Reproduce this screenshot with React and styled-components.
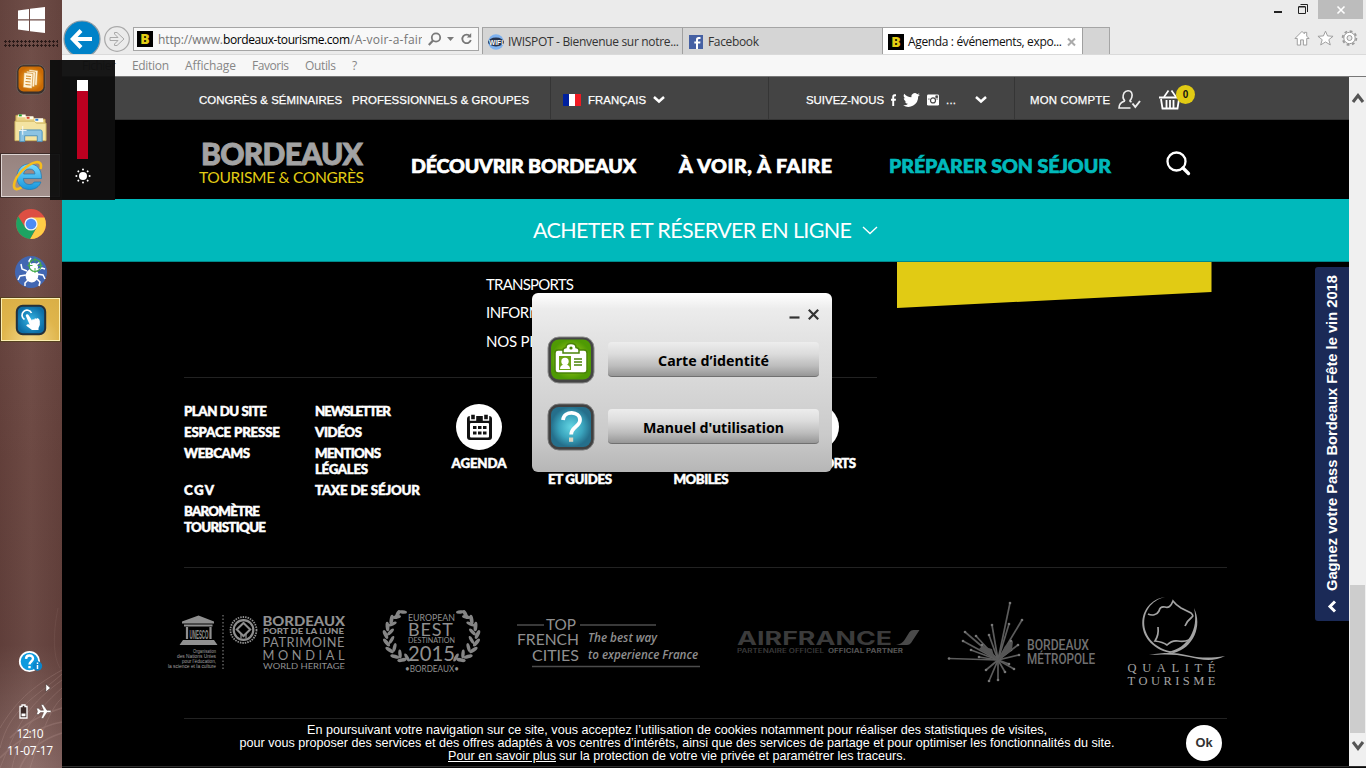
import React, { useLayoutEffect, useRef, useState } from "react";
import styled, { createGlobalStyle } from "styled-components";

const Global = createGlobalStyle`
  * { box-sizing: border-box; }
  html, body { margin: 0; padding: 0; overflow: hidden; background: #000; }
  svg { display: block; flex: none; overflow: visible; }
`;

const ui = `"Open Sans", "Noto Sans", sans-serif`;
const arial = `"Liberation Sans", Arial, sans-serif`;
const geo = `Lato, "Open Sans", sans-serif`;

/* Label that spreads its letters to fill a given width */
const FitBox = styled.span`
  display: inline-block;
  flex: none;
  white-space: nowrap;
  width: ${(p) => p.$w}px;
`;
function Fit({ w, children }) {
  const ref = useRef(null);
  const [spacing, setSpacing] = useState(0);
  useLayoutEffect(() => {
    const range = document.createRange();
    range.selectNodeContents(ref.current);
    const count = ref.current.textContent.length;
    setSpacing((w - range.getBoundingClientRect().width) / Math.max(1, count - 1));
  }, [w]);
  return (
    <FitBox $w={w} ref={ref} style={{ letterSpacing: `${spacing}px` }}>
      {children}
    </FitBox>
  );
}

/* ---------- shell ---------- */
const Desktop = styled.div`
  position: relative;
  display: flex;
  width: 1366px;
  height: 768px;
  overflow: hidden;
`;
const Taskbar = styled.aside`
  position: relative;
  display: flex;
  flex-direction: column;
  align-items: center;
  width: 62px;
  height: 768px;
  background: linear-gradient(90deg, rgba(40, 15, 15, 0.12), rgba(255, 255, 255, 0.02) 50%, rgba(40, 15, 15, 0.12)),
    linear-gradient(180deg, #6c4a44 0%, #714d47 30%, #6a4640 60%, #674540 84%, #785853 91%, #8d6d69 100%);
`;
const Strands = styled.svg`
  position: absolute;
  left: 0;
  top: 608px;
  z-index: 0;
`;
const StartSlot = styled.div`
  height: 40px;
  padding-top: 7px;
`;
const Grip = styled.div`
  width: 54px;
  height: 8px;
  margin-bottom: 8px;
  background: radial-gradient(circle at 1.5px 1.5px, #2a1a18 1px, transparent 1.3px) 0 0 / 4px 4px;
`;
const TaskButton = styled.div`
  display: flex;
  align-items: center;
  justify-content: center;
  width: 61px;
  height: 45px;
  margin: 1px 1px 2px 0;
  ${(p) => p.$kind === "open" && `background: linear-gradient(180deg, #97837f, #a3918d); border: 1px solid #3f2c29; box-shadow: inset 0 0 0 1px #ded4d2; padding-right: 5px;`}
  ${(p) => p.$kind === "active" && `background: radial-gradient(circle at 50% 100%, #f4d98a, #dfb54c 55%, #d9ae45); border: 1px solid #55401f; box-shadow: inset 0 0 0 1px #fbeeb0;`}
`;
const Tray = styled.div`
  position: relative;
  z-index: 1;
  display: flex;
  flex-direction: column;
  width: 62px;
  margin-top: auto;
  height: 118px;
  color: #fff;
  font: 12px/17px ${ui};
`;
const TrayHelp = styled.div`
  padding-left: 18px;
  height: 33px;
`;
const TrayArrow = styled.div`
  padding-left: 45px;
  height: 21px;
`;
const TrayStatus = styled.div`
  display: flex;
  gap: 8px;
  padding-left: 19px;
  height: 21px;
`;
const Clock = styled.div`
  display: flex;
  flex-direction: column;
  align-items: center;
  padding-right: 2px;
`;
const Brightness = styled.div`
  position: absolute;
  left: 50px;
  top: 60px;
  z-index: 5;
  display: flex;
  flex-direction: column;
  align-items: center;
  width: 65px;
  height: 140px;
  padding-top: 20px;
  gap: 9px;
  background: rgba(14, 14, 14, 0.96);
`;
const Level = styled.div`
  width: 11px;
  height: 79px;
  border-top: 11px solid #fff;
  background: #bd0020;
`;

/* ---------- browser chrome ---------- */
const Browser = styled.main`
  display: flex;
  flex-direction: column;
  width: 1304px;
  height: 768px;
  background: #ebebeb;
`;
const TitleBar = styled.div`
  display: flex;
  justify-content: flex-end;
  height: 19px;
  padding-right: 3px;
`;
const WinControls = styled.div`
  display: flex;
  align-items: flex-start;
  gap: 16px;
  padding: 4px 10px 0 0;
`;
const CloseBox = styled.div`
  display: flex;
  align-items: center;
  justify-content: center;
  width: 45px;
  height: 19px;
  background: #bcbcbc;
`;
const NavRow = styled.div`
  display: flex;
  align-items: flex-start;
  height: 35px;
  overflow: hidden;
`;
const BackBtn = styled.div`
  width: 39px;
  padding: 1px 0 0 1px;
`;
const ForwardBtn = styled.div`
  width: 32px;
  padding: 7px 0 0 3px;
`;
const AddressBar = styled.div`
  display: flex;
  align-items: center;
  width: 346px;
  height: 24px;
  margin-top: 8px;
  padding: 0 6px 0 3px;
  border: 1px solid #a5a5a5;
  background: #f8f8f8;
`;
const Url = styled.div`
  display: flex;
  width: 264px;
  margin: 0 6px 0 5px;
  padding-top: 1px;
  overflow: hidden;
  color: #757575;
  font: 12px/20px ${ui};
  b { font-weight: 400; color: #000; }
`;
const Tabs = styled.div`
  display: flex;
  margin: 8px 0 0 3px;
  height: 27px;
  border-top: 1px solid #a5a5a5;
  border-right: 1px solid #a5a5a5;
`;
const Tab = styled.div`
  display: flex;
  align-items: center;
  gap: 4px;
  width: ${(p) => p.$w}px;
  padding: 1px 0 0 5px;
  border-left: 1px solid #a0a0a0;
  background: ${(p) => (p.$active ? "#fff" : "#d5d5d5")};
  color: ${(p) => (p.$active ? "#111" : "#333")};
  font: 12px/20px ${ui};
`;
const BadgeB = styled.span`
  width: 16px;
  height: 16px;
  background: #000;
  color: #e3cd14;
  text-align: center;
  font: 900 14px/16px ${ui};
`;
const BrowserTools = styled.div`
  display: flex;
  gap: 7px;
  margin: 11px 8px 0 auto;
`;
const MenuBar = styled.div`
  display: flex;
  align-items: center;
  gap: 16px;
  height: 23px;
  padding: 1px 0 0 20px;
  border-top: 1px solid #dadada;
  border-bottom: 1px solid #777;
  background: #f7f7f7;
  color: #868686;
  font: 12px/20px ${ui};
`;
const Viewport = styled.div`
  display: flex;
  height: 689px;
`;
const BottomEdge = styled.div`
  height: 2px;
  background: #2f2f2f;
  border-bottom: 1px solid #0a0a0a;
`;
const Scrollbar = styled.div`
  display: flex;
  flex-direction: column;
  align-items: center;
  width: 17px;
  background: #f0f0f0;
  padding: 17px 0 16px;
`;
const Thumb = styled.div`
  width: 15px;
  height: 148px;
  margin: auto 0 8px;
  background: #cdcdcd;
`;

/* ---------- web page ---------- */
const Page = styled.div`
  position: relative;
  width: 1287px;
  height: 689px;
  background: #000;
  color: #fff;
`;
const TopBar = styled.div`
  display: flex;
  height: 43px;
  border-bottom: 1px solid #353535;
  background: #444;
  font: 11.4px/16px ${arial};
  -webkit-text-stroke: 0.25px #fff;
`;
const TopCell = styled.div`
  display: flex;
  align-items: center;
  gap: ${(p) => p.$gap || 7}px;
  width: ${(p) => p.$w}px;
  padding: 3px 0 0 ${(p) => p.$pad}px;
  border-left: ${(p) => (p.$first ? "none" : "1px solid #353535")};
`;
const Flag = styled.span`
  width: 18px;
  height: 12px;
  background: linear-gradient(90deg, #00209f 33%, #fff 33% 67%, #f11a22 67%);
`;
const Spacer = styled.span`
  width: ${(p) => p.$w}px;
`;
const Basket = styled.div`
  position: relative;
`;
const Count = styled.span`
  position: absolute;
  left: 17px;
  top: -5px;
  width: 19px;
  height: 19px;
  border-radius: 50%;
  background: #e1cb14;
  color: #111;
  text-align: center;
  font: bold 10px/19px ${arial};
  -webkit-text-stroke: 0;
`;
const Header = styled.header`
  display: flex;
  height: 79px;
  padding-left: 137px;
`;
const Brand = styled.div`
  display: flex;
  flex-direction: column;
  width: 212px;
  padding-top: 15px;
`;
const BrandName = styled.div`
  padding-left: 2px;
  color: #a3a3a3;
  font: 900 30px/36px ${geo};
  -webkit-text-stroke: 0.9px #a3a3a3;
`;
const BrandSub = styled.div`
  margin-top: -3px;
  color: #e1cb14;
  font: 400 15.6px/18px ${geo};
`;
const NavItem = styled.div`
  padding-top: 34px;
  margin-right: ${(p) => p.$mr}px;
  color: ${(p) => (p.$teal ? "#00b9bb" : "#fff")};
  font: 900 19.6px/24px ${geo};
  -webkit-text-stroke: 0.7px currentColor;
`;
const SearchSlot = styled.div`
  padding-top: 31px;
`;
const BookBar = styled.div`
  display: flex;
  align-items: center;
  gap: 10px;
  height: 63px;
  padding-left: 471px;
  border-bottom: 1px solid #00898b;
  background: #00b9bb;
  font: 400 21.5px/26px ${geo};
`;
const Upper = styled.section`
  display: flex;
  height: 115px;
`;
const LinkList = styled.div`
  width: 411px;
  margin-left: 424px;
  padding-top: 7.5px;
  font: 400 15px/28.5px ${geo};
`;
const Rule = styled.div`
  width: ${(p) => p.$w}px;
  height: 1px;
  margin-left: 122px;
  background: #222;
`;
const FooterBlock = styled.section`
  display: flex;
  height: 189px;
  padding: 25px 0 0 122px;
  font: 900 13.3px/16px ${geo};
  -webkit-text-stroke: 0.5px #fff;
`;
const FooterLinks = styled.div`
  display: grid;
  grid-template-columns: 131px 114px;
  align-content: start;
  row-gap: 5px;
`;
const Shortcut = styled.div`
  display: flex;
  flex-direction: column;
  align-items: center;
  width: ${(p) => p.$w}px;
  padding-top: 1px;
`;
const Disc = styled.div`
  display: flex;
  align-items: center;
  justify-content: center;
  width: 46px;
  height: 46px;
  margin-bottom: 5px;
  border-radius: 50%;
  background: #fff;
`;
const Logos = styled.section`
  display: flex;
  height: 150px;
  padding: 22px 0 0 103px;
  gap: 30px;
`;
const LogoPair = styled.div`
  display: flex;
  gap: 23px;
`;
const Cookies = styled.section`
  display: flex;
  padding-top: 5px;
  font: 12.6px/13px ${arial};
`;
const CookieText = styled.div`
  display: flex;
  flex-direction: column;
  align-items: center;
  width: 876px;
  margin-left: 177px;
`;
const CookieLine = styled.div`
  display: flex;
  gap: 3px;
`;
const OkButton = styled.div`
  width: 36px;
  height: 36px;
  margin: 1px 0 0 71px;
  border-radius: 50%;
  background: #fff;
  color: #333;
  text-align: center;
  font: bold 12.8px/36px ${arial};
`;
const SideTab = styled.div`
  position: absolute;
  right: 0;
  top: 190px;
  display: flex;
  flex-direction: column;
  align-items: center;
  width: 34px;
  height: 354px;
  padding-top: 7px;
  border-radius: 3px 0 0 3px;
  background: #1b2a57;
`;
const SideText = styled.div`
  writing-mode: vertical-rl;
  transform: rotate(180deg);
  height: 317px;
  margin-bottom: 9px;
  white-space: nowrap;
  font: bold 14.7px/16px ${arial};
`;

/* ---------- floating dialog ---------- */
const Dialog = styled.div`
  position: absolute;
  left: 532px;
  top: 293px;
  z-index: 6;
  width: 300px;
  height: 179px;
  padding: 16px 13px 0 15px;
  border-radius: 6px;
  background: linear-gradient(180deg, #fff 0%, #ececec 9%, #e3e3e3 25%, #cacaca 80%, #b6b6b6 100%);
`;
const DialogBar = styled.div`
  display: flex;
  justify-content: flex-end;
  gap: 8px;
  height: 27px;
`;
const DialogRow = styled.div`
  display: flex;
  align-items: center;
  justify-content: space-between;
  height: 48px;
  margin-bottom: 19px;
`;
const DialogButton = styled.div`
  display: flex;
  align-items: center;
  justify-content: center;
  width: 211px;
  height: 35px;
  padding-top: 3px;
  margin-bottom: 1px;
  border-radius: 4px;
  border-bottom: 1px solid #707070;
  background: linear-gradient(180deg, #ededed 0%, #dcdcdc 35%, #bdbdbd 70%, #969696 100%);
  color: #000;
  font: 700 14.2px/20px "Noto Sans", ${ui};
`;

/* ---------- icons ---------- */
const WindowsLogo = () => (
  <svg width="27" height="26" viewBox="0 0 27 26" fill="#fff">
    <path d="M0 3.500 11 2v10.300H0zM12 1.800 27 0v12.300H12zM0 13.400h11V24L0 22.400zM12 13.400h15V26L12 24.200z" />
  </svg>
);
const OrangeApp = () => (
  <svg width="30" height="31" viewBox="0 0 30 31">
    <defs><radialGradient id="or"><stop offset="0" stopColor="#ffb52e" /><stop offset="1" stopColor="#c96a05" /></radialGradient></defs>
    <rect x=".7" y=".7" width="28.600" height="29.600" rx="7" fill="#3a302c" stroke="#6d5d58" />
    <rect x="2.500" y="2.500" width="25" height="25" rx="5" fill="url(#or)" />
    <g fill="#fff3d6" stroke="#c77a14" strokeWidth=".6">
      <path d="M13 5.500l9 1-1 15-9-1z" /><path d="M10.500 7l9 1-1 15-9-1z" /><path d="M8 8.500l9 1-1 15-9-1z" />
    </g>
    <path d="M10 12l5 .5M10 14.500l5 .5M9.500 17.500l5 .5M9.500 20.500l5 .5" stroke="#d08420" />
  </svg>
);
const FolderIcon = () => (
  <svg width="33" height="30" viewBox="0 0 34 30">
    <path d="M2 2h9l2 2h7l2 2h10v20H2z" fill="#e9d083" stroke="#c5a851" />
    <path d="M4 1h8v3H4zM12 3h8v3h-8zM21 5h9v4h-9z" fill="#fffbe9" />
    <path d="M5 1h3v2H5z" fill="#1f9e2c" /><path d="M13 3.500h3v2h-3z" fill="#d8432a" /><path d="M22 5.500h3v2h-3z" fill="#2d7fd8" />
    <path d="M1 8h20l2 2h10v18H1z" fill="#f4e3a1" stroke="#d3b964" />
    <path d="M6 29V19q0-2 2-2h19q2 0 2 2v10h-5v-6H11v6z" fill="#8cc3e2" stroke="#4d92bb" />
    <path d="M9 13v9M5 17.500h8" stroke="#fff" strokeWidth="1" opacity=".9" />
  </svg>
);
const IEIcon = () => (
  <svg width="34" height="32" viewBox="0 0 34 32">
    <defs><linearGradient id="ie" x2="0" y2="1"><stop offset="0" stopColor="#7bdcff" /><stop offset="1" stopColor="#1795db" /></linearGradient></defs>
    <path d="M30.500 18.500H12.500c0 4 2.500 6 6 6 2.400 0 4-1 4.700-2.500h6.700c-1.600 5-6 7.500-11.400 7.500C11 29.500 6 24.500 6 17S11 4 18.300 4C26 4 30.600 9 30.500 18.500zM12.600 14H24c-.2-3.200-2.200-5-5.500-5s-5.500 1.800-5.900 5z" fill="url(#ie)" stroke="#1b78b4" strokeWidth=".7" />
    <path d="M29.500 9C31 4 29 1.500 25 2.200 17 3.500 4 15 3 25c-.3 4.500 3 5.300 7.500 2.500" fill="none" stroke="#f6bd1d" strokeWidth="2.600" />
  </svg>
);
const ChromeIcon = () => (
  <svg width="30" height="30" viewBox="0 0 30 30">
    <circle cx="15" cy="15" r="15" fill="#dd4f43" />
    <path d="M15 8.500h13.500A15 15 0 0 1 14 30l7-12z" fill="#ffcd46" />
    <path d="M2.200 7.300 9.300 18.500 20.800 18 14 30A15 15 0 0 1 2.200 7.300z" fill="#1da362" />
    <circle cx="15" cy="15" r="6.600" fill="#f4f4f4" /><circle cx="15" cy="15" r="5.300" fill="#4c8bf5" />
  </svg>
);
const BugIcon = () => (
  <svg width="32" height="32" viewBox="0 0 32 32">
    <circle cx="16" cy="16" r="16" fill="#4267b2" />
    <ellipse cx="17" cy="19.500" rx="6.300" ry="7" fill="#fff" transform="rotate(20 17 19.500)" />
    <circle cx="19" cy="11" r="4" fill="#fff" />
    <path d="M16 9 14 5l2-3M21 9l4-3M12 15l-5-2-1-5M11 19l-6 1-2 4M13 24l-3 3v3M22 18l6 1 2 4M22 23l3 3-1 4M22 14l5-2 3 1" fill="none" stroke="#fff" strokeWidth="1.500" />
    <circle cx="20" cy="9.500" r="6" fill="none" stroke="#46ad49" strokeWidth="1.200" />
    <path d="M20 1.500v5M20 12v5M12.500 9.500h5M22.500 9.500h5" stroke="#46ad49" strokeWidth="1" />
  </svg>
);
const TouchIcon = () => (
  <svg width="30" height="30" viewBox="0 0 30 30">
    <defs><radialGradient id="tb"><stop offset="0" stopColor="#35b4e4" /><stop offset="1" stopColor="#0d6ea6" /></radialGradient></defs>
    <rect x=".8" y=".8" width="28.400" height="28.400" rx="6" fill="url(#tb)" stroke="#25303a" strokeWidth="2" />
    <path d="M8.500 14.500a5 5 0 1 1 7-6.500" fill="none" stroke="#fff" strokeWidth="1.700" />
    <path d="M10.200 9.500q1.500-1 2.500.7l3.300 5.300.5-1.300 1.900.3.400-1.200 1.800.5.500-.7q2.600.6 2.700 3v4l-1.300 3v2h-6.500l-5.700-4.300q0-1.900 2.200-1.500l1.200.5-3.700-8.500q-.5-1 .2-1.800z" fill="#fff" />
  </svg>
);
const Search = ({ s = 22, c = "#fff", w = 2.6 }) => (
  <svg width={s} height={s} viewBox="0 0 24 24" fill="none" stroke={c}>
    <circle cx="10.500" cy="10.500" r="9" strokeWidth={w} />
    <path d="m17 17 5.500 5.500" strokeWidth={w + 1} strokeLinecap="round" />
  </svg>
);
const Chevron = ({ w = 12, h = 7, c = "#fff", s = 2.5, up }) => (
  <svg width={w} height={h} viewBox={`0 0 ${w} ${h}`} fill="none" stroke={c} strokeWidth={s}>
    <path d={up ? `M1 ${h - 1} ${w / 2} 1.500 ${w - 1} ${h - 1}` : `M1 1 ${w / 2} ${h - 1.5} ${w - 1} 1`} />
  </svg>
);

/* Text inside partner logos, set to an exact length; "spaced" keeps the glyph shapes */
const Txt = ({ children, x, y, l, s, c = "#8f8f8f", f = "Open Sans", w = 400, it, spaced }) => (
  <text
    x={x}
    y={y}
    textLength={l}
    lengthAdjust={spaced ? "spacing" : "spacingAndGlyphs"}
    fontSize={s}
    fill={c}
    fontFamily={`"${f}", sans-serif`}
    fontWeight={w}
    fontStyle={it ? "italic" : "normal"}
  >
    {children}
  </text>
);

const Unesco = () => (
  <svg width="185" height="100" viewBox="165 590 185 100">
    <g fill="#8f8f8f">
      <path d="M182 621.500 198.500 615.500 214 621.500v2h-32zM184 624.500h28.500v2H184zM183 640h31l3.500 5h-38z" />
      <path d="M187 627v12M210.500 627v12" stroke="#8f8f8f" strokeWidth="2.200" />
      <path d="M223 615v55" stroke="#8f8f8f" strokeDasharray="1.500 2" />
    </g>
    <Txt x={189.5} y={638.5} l={19} s={13.5} w={700} f="Liberation Sans">UNESCO</Txt>
    <Txt x={193} y={652.5} l={23} s={5.3} c="#a0a0a0" f="Liberation Sans">Organisation</Txt>
    <Txt x={177} y={657.8} l={39} s={5.3} c="#a0a0a0" f="Liberation Sans">des Nations Unies</Txt>
    <Txt x={182} y={663} l={34} s={5.3} c="#a0a0a0" f="Liberation Sans">pour l’éducation,</Txt>
    <Txt x={168} y={668.3} l={48} s={5.3} c="#a0a0a0" f="Liberation Sans">la science et la culture</Txt>
    <g fill="none" stroke="#8f8f8f">
      <circle cx="243.500" cy="630" r="13" strokeWidth="1.800" strokeDasharray="1.500 1" />
      <circle cx="243.500" cy="630" r="9.800" strokeWidth="2.200" />
      <path d="m236.800 629.500 6.700-6.500 6.700 6.500-6.700 6.500z" strokeWidth="2" /><path d="M241 638.500v-5M246 638.500v-5" strokeWidth="1.300" />
    </g>
    <Txt x={262.5} y={625.5} l={82.5} s={13.5} f="Lato" w={900}>BORDEAUX</Txt>
    <Txt x={263} y={634.3} l={81} s={7.8} f="Lato" w={900}>PORT DE LA LUNE</Txt>
    <Txt x={262.5} y={647} l={82} s={12.8} f="Lato" spaced>PATRIMOINE</Txt>
    <Txt x={262.5} y={659.5} l={82} s={12.8} f="Lato" spaced>MONDIAL</Txt>
    <Txt x={263} y={668.5} l={82} s={8.3} f="Lato">WORLD HERITAGE</Txt>
  </svg>
);
const leaves = [[402, 660, 10], [395, 656.5, 35], [389.5, 650, 55], [386.5, 642.5, 70], [385.5, 634.5, 85], [387.5, 626.5, 105], [391.5, 619.5, 120], [397.5, 614.5, 135]];
const Wreath = () => (
  <g fill="#858585">
    {leaves.map(([x, y, a], k) => (
      <g key={k}>
        <ellipse cx={x} cy={y} rx="4.800" ry="1.900" transform={`rotate(${a - 20} ${x} ${y})`} />
        <ellipse cx={x + 5} cy={y - 2.5} rx="4.500" ry="1.700" transform={`rotate(${a + 50} ${x + 5} ${y - 2.5})`} />
      </g>
    ))}
  </g>
);
const BestDestination = () => (
  <svg width="105" height="100" viewBox="380 590 105 100">
    <Wreath />
    <g transform="translate(863 0) scale(-1 1)"><Wreath /></g>
    <Txt x={408} y={621} l={47} s={10} f="Lato">EUROPEAN</Txt>
    <Txt x={408} y={635.8} l={45} s={18} f="Lato" spaced>BEST</Txt>
    <Txt x={408} y={643.3} l={47} s={6.8} f="Lato">DESTINATION</Txt>
    <Txt x={408} y={660.5} l={47} s={20.5} f="Lato">2015</Txt>
    <Txt x={405} y={672.3} l={54} s={9} f="Lato">•BORDEAUX•</Txt>
  </svg>
);
const FrenchCities = () => (
  <svg width="190" height="100" viewBox="515 590 190 100">
    <path d="M517 625h27M580 625h76M532 666.500h168" stroke="#4c4c4c" strokeWidth="1.400" />
    <Txt x={546} y={629.5} l={30} s={16} f="Lato">TOP</Txt>
    <Txt x={517} y={645.3} l={62} s={16} f="Lato">FRENCH</Txt>
    <Txt x={532} y={661} l={47} s={16} f="Lato">CITIES</Txt>
    <Txt x={588} y={642} l={69} s={12} w={600} it>The best way</Txt>
    <Txt x={588} y={659} l={110} s={12} w={600} it>to experience France</Txt>
  </svg>
);
const AirFrance = () => (
  <svg width="187" height="100" viewBox="735 590 187 100">
    <Txt x={737} y={645} l={155} s={19} c="#3b3b3b" f="Inter" w={700}>AIRFRANCE</Txt>
    <path d="M896 645q6-1 8.500-5l5-8q1.500-2 4-2h6l-8.500 13q-1.500 2-4 2z" fill="#4a4a4a" />
    <Txt x={737} y={652.7} l={87} s={5.5} c="#3b3b3b" f="Inter" w={600}>PARTENAIRE OFFICIEL</Txt>
    <Txt x={828} y={652.7} l={75} s={5.5} c="#555" f="Inter" w={700}>OFFICIAL PARTNER</Txt>
  </svg>
);
const rays = [[1010, 603], [1022, 620], [992, 625], [1009, 624], [965, 632], [963, 641], [976, 636], [989, 635], [971, 650], [949, 658.5], [1011, 641], [1018, 645], [1019, 655], [979, 657], [986, 670], [989, 681], [998, 680], [1014, 669], [1009, 664], [1005, 672], [1011, 650], [982, 645]];
const Metropole = () => (
  <svg width="155" height="100" viewBox="945 590 155 100">
    <g stroke="#5c5c5c" fill="#777">
      {rays.map(([x, y], k) => (
        <g key={k}><path d={`M998 660 ${x} ${y}`} strokeWidth="1.700" /><circle cx={x} cy={y} r="1.300" stroke="none" /></g>
      ))}
      <path d="m998 660-19-11 3-3 10 3 2 7zM998 660l7-14 8-5-1 9z" fill="#555" stroke="none" />
    </g>
    <Txt x={1027} y={649.5} l={62} s={14} c="#707070" f="Roboto" w={500}>BORDEAUX</Txt>
    <Txt x={1027} y={664} l={68} s={14} c="#707070" f="Roboto" w={500}>MÉTROPOLE</Txt>
  </svg>
);
const Qualite = () => (
  <svg width="105" height="100" viewBox="1123 590 105 100">
    <g fill="#a3a3a3">
      <path d="M1165 597c-29 7-29 49 9 55l-4 1c-38-9-34-52-5-56z" />
      <path d="M1194 608c9 18-1 40-20 45l-6-1c20-4 31-23 26-44z" />
      <path d="M1149 655c22-4 32-1 42 1 10 2 21 2 34 0-11 6-24 4-36 1-13-3-24-3-40-2z" />
    </g>
    <path d="M1148 614c4 2 9 1 11-3q1-5 6-4 5 2 8-6 3 4 8 7l10 5q3 3 1 4-5 4-7 9M1158 627q1 8-3 14 8 1 12 4 5-5 11-4 6 1 11-1" fill="none" stroke="#a3a3a3" strokeWidth="1.700" />
    <Txt x={1127.5} y={672} l={88} s={12.5} c="#a3a3a3" f="Liberation Serif" spaced>QUALITÉ</Txt>
    <Txt x={1127.5} y={684.5} l={88} s={12.5} c="#a3a3a3" f="Liberation Serif" spaced>TOURISME</Txt>
  </svg>
);

export default function App() {
  return (
    <Desktop>
      <Global />
      <Taskbar>
        <Strands width="62" height="160" viewBox="0 0 62 160" fill="none" stroke="#c7a59f" strokeWidth="1">
          <g opacity=".22">
            <path d="M62 66C35 90 10 100 0 140M62 72C30 96 20 110 0 160M62 80C45 95 20 120 12 160M62 90C50 100 40 130 30 160M62 62C30 80 15 95 0 120" />
            <path d="M10 130q20-20 52-30M0 150q30-30 62-36M20 160q10-25 42-35" strokeWidth="1.600" />
          </g>
          <path d="M58 0C52 30 54 50 60 60" opacity=".1" />
        </Strands>
        <StartSlot><WindowsLogo /></StartSlot>
        <Grip />
        <TaskButton><OrangeApp /></TaskButton>
        <TaskButton><FolderIcon /></TaskButton>
        <TaskButton $kind="open"><IEIcon /></TaskButton>
        <TaskButton><ChromeIcon /></TaskButton>
        <TaskButton><BugIcon /></TaskButton>
        <TaskButton $kind="active"><TouchIcon /></TaskButton>
        <Tray>
          <TrayHelp>
            <svg width="24" height="23" viewBox="0 0 24 23">
              <circle cx="11.500" cy="11.500" r="9.700" fill="#0d9ade" stroke="#fff" strokeWidth="1.800" />
              <path d="M8 8.800c.3-4.600 7.200-4.300 7 0-.1 2.700-3.500 2.800-3.500 5.700M11.500 16v2.200" fill="none" stroke="#fff" strokeWidth="2.400" />
              <circle cx="19.500" cy="16" r="4.700" fill="#0a86cc" />
              <path d="M19.500 15v4M19.500 12.600v1.400" stroke="#fff" strokeWidth="1.500" />
            </svg>
          </TrayHelp>
          <TrayArrow><svg width="7" height="10" viewBox="0 0 7 10"><path d="M.8.8 5.500 5 .8 9z" fill="#fff" stroke="#3b2a28" strokeWidth=".6" /></svg></TrayArrow>
          <TrayStatus>
            <svg width="9" height="15" viewBox="0 0 9 15"><path d="M1 2.500h2V1h3v1.500h2V14H1z" fill="#3a2927" stroke="#fff" strokeWidth="1.300" /><path d="M2.500 9.500h4v2.800h-4z" fill="#fff" /></svg>
            <svg width="16" height="15" viewBox="0 0 16 15" fill="#fff" stroke="#3a2927" strokeWidth=".4"><path d="M.5 4.300h2l2 2h3L5 .5h2.200L11 6.300h3q2 1.100 0 2.200h-3L7.200 14.500H5l2.500-6h-3l-2 2h-2l1-3.100z" /></svg>
          </TrayStatus>
          <Clock><Fit w={27}>12:10</Fit><Fit w={46}>11-07-17</Fit></Clock>
        </Tray>
      </Taskbar>

      <Browser>
        <TitleBar>
          <WinControls>
            <svg width="8" height="12"><path d="M0 8h8" stroke="#222" strokeWidth="2" /></svg>
            <svg width="10" height="10" fill="none" stroke="#222"><path d="M.5 3h7v6.500h-7zM.5 2.500h7M2.500.5h7V8" strokeWidth="1" /></svg>
          </WinControls>
          <CloseBox><svg width="8" height="8"><path d="M.5.5l7 7M7.500.5l-7 7" stroke="#fff" strokeWidth="1.600" /></svg></CloseBox>
        </TitleBar>
        <NavRow>
          <BackBtn>
            <svg width="38" height="38" viewBox="0 0 38 38"><circle cx="19" cy="19" r="18" fill="#0082c8" stroke="#8b9aa3" strokeWidth="1.200" /><path d="M18 10.500 9.800 19l8.200 8.500M10.500 19H29" fill="none" stroke="#fff" strokeWidth="4" /></svg>
          </BackBtn>
          <ForwardBtn>
            <svg width="26" height="26" viewBox="0 0 26 26" fill="none" stroke="#a9a9a9"><circle cx="13" cy="13" r="12.300" strokeWidth="1.200" /><path d="M6 11.500h8L10.500 8V6.500H13L20 13l-7 6.500h-2.500V18l3.500-3.500H6z" /></svg>
          </ForwardBtn>
          <AddressBar>
            <BadgeB>B</BadgeB>
            <Url><Fit w={65}>http://www.</Fit><b><Fit w={127}>bordeaux-tourisme.com</Fit></b><Fit w={80}>/A-voir-a-faire</Fit></Url>
            <svg width="13" height="14" viewBox="0 0 13 14" fill="none" stroke="#7a7a7a"><circle cx="8" cy="5.500" r="4.200" strokeWidth="1.800" /><path d="M5 8.500.8 13" strokeWidth="2.200" /></svg>
            <Spacer $w={6} />
            <svg width="7" height="4"><path d="M0 0h7L3.500 4z" fill="#7a7a7a" /></svg>
            <Spacer $w={7} />
            <svg width="11" height="12" viewBox="0 0 11 12" fill="none" stroke="#777" strokeWidth="1.800"><path d="M9 3.200A4.300 4.300 0 1 0 9.800 7" /><path d="M10.200 0v4.500H5.800z" fill="#777" stroke="none" /></svg>
          </AddressBar>
          <Tabs>
            <Tab $w={200}>
              <svg width="16" height="16" viewBox="0 0 16 16"><circle cx="8" cy="8" r="7.800" fill="#7fb2ef" /><ellipse cx="8" cy="8" rx="8" ry="4.400" fill="#26334d" /><text x="1" y="10.500" fontSize="6.500" fontWeight="700" textLength="14" fill="#fff" fontFamily="Liberation Sans">WIFI</text></svg>
              <Fit w={171}>IWISPOT - Bienvenue sur notre...</Fit>
            </Tab>
            <Tab $w={200}>
              <svg width="16" height="16" viewBox="0 0 16 16"><rect x="1" y="1" width="14" height="14" fill="#4560a3" /><path d="M10 15V9.500h2.200l.3-2H10V6q0-1 1-1h1.500V3H10.500Q8 3 8 5.800v1.700H6.300v2H8V15z" fill="#fff" /></svg>
              <Fit w={51}>Facebook</Fit>
            </Tab>
            <Tab $w={200} $active>
              <BadgeB>B</BadgeB>
              <Fit w={154}>Agenda : événements, expo...</Fit>
              <svg width="11" height="8"><path d="M2 .5l7 7M9 .5l-7 7" stroke="#aaa" strokeWidth="2" /></svg>
            </Tab>
            <Tab $w={27} />
          </Tabs>
          <BrowserTools>
            <svg width="16" height="16" viewBox="0 0 17 16" fill="#fff" stroke="#9a9a9a"><path d="M1 8.500 8.500 1l2.500 2.500V2h2.500v4L16 8.500h-2.500v7H10V10H7v5.500H3.500v-7z" /></svg>
            <svg width="17" height="16" viewBox="0 0 18 16" fill="#fff" stroke="#9a9a9a"><path d="m9 .8 2.200 5 5.800.4-4.500 3.600 1.600 5.500L9 12.200l-5.100 3.100 1.600-5.500L1 6.200l5.800-.4z" /></svg>
            <svg width="17" height="16" viewBox="0 0 17 16" fill="none" stroke="#9a9a9a"><circle cx="8.500" cy="8" r="6.900" strokeWidth="1.800" strokeDasharray="2.800 2.620" /><circle cx="8.500" cy="8" r="5.700" fill="#fff" /><circle cx="8.500" cy="8" r="2.500" fill="#ebebeb" /></svg>
          </BrowserTools>
        </NavRow>
        <MenuBar>
          <Fit w={34}>Fichier</Fit><Fit w={37}>Edition</Fit><Fit w={51}>Affichage</Fit><Fit w={37}>Favoris</Fit><Fit w={31}>Outils</Fit><Fit w={5}>?</Fit>
        </MenuBar>
        <Viewport>
          <Page>
            <TopBar>
              <TopCell $first $w={488} $pad={137} $gap={10}><Fit w={143}>CONGRÈS & SÉMINAIRES</Fit><Fit w={177}>PROFESSIONNELS & GROUPES</Fit></TopCell>
              <TopCell $w={218} $pad={12}><Flag /><Fit w={58}>FRANÇAIS</Fit><Chevron /></TopCell>
              <TopCell $w={246} $pad={37}>
                <Fit w={78}>SUIVEZ-NOUS</Fit>
                <svg width="5" height="12" viewBox="0 0 6 12" preserveAspectRatio="none" fill="#fff"><path d="M1.500 12V6.700H0v-2h1.500V3Q1.500.2 4 .2h2v2H4.700q-.9 0-.9.9v1.600H6l-.3 2H3.800V12z" /></svg>
                <svg width="17" height="14" viewBox="0 0 24 20" fill="#fff"><path d="M24 2.400a9.800 9.800 0 0 1-2.800.8 5 5 0 0 0 2.100-2.700c-1 .6-2 1-3.100 1.200A4.900 4.900 0 0 0 11.800 6C7.700 5.900 4.100 4 1.700 1A4.900 4.900 0 0 0 3.200 7.600c-.8 0-1.600-.2-2.200-.6 0 2.300 1.600 4.400 3.900 4.900-.7.200-1.500.2-2.200.1.600 2 2.400 3.400 4.600 3.400A9.900 9.900 0 0 1 0 17.500a14 14 0 0 0 21.500-12.400c1-.7 1.800-1.600 2.500-2.700z" /></svg>
                <svg width="12" height="12" viewBox="0 0 13 12"><rect width="13" height="12" rx="1.500" fill="#fff" /><circle cx="6.500" cy="6.500" r="2.700" fill="none" stroke="#444" strokeWidth="1.300" /><path d="M9.500 1.500h2v2h-2zM1 5h2M10 5h2" fill="#444" stroke="#444" strokeWidth=".8" /></svg>
                <Fit w={10}>...</Fit><Spacer $w={5} /><Chevron />
              </TopCell>
              <TopCell $w={335} $pad={15} $gap={8}>
                <Fit w={80}>MON COMPTE</Fit>
                <svg width="23" height="19" viewBox="0 0 23 19" fill="none" stroke="#eee"><path d="M7 11C5 9 4.500 6 6 3c2-3 6-3 7.500-.5 1.500 3 0 7-2 8.500M7 11c-4 1-6 3-6 7h11.500M11.500 11l2 1" strokeWidth="1.600" /><path d="m14.500 13.500 2.800 3.500L22 11" strokeWidth="2" /></svg>
                <Spacer $w={2} />
                <Basket>
                  <svg width="22" height="20" viewBox="0 0 22 20" fill="none" stroke="#fff"><path d="M0 7.500h22M2 9l1.500 9.500h15L20 9M7.500 10v8M11 10v8M14.500 10v8" strokeWidth="1.800" /><path d="M5 7l4.500-6.500M17 7 12.500.5" strokeWidth="1.700" /></svg>
                  <Count>0</Count>
                </Basket>
              </TopCell>
            </TopBar>
            <Header>
              <Brand>
                <BrandName><Fit w={162}>BORDEAUX</Fit></BrandName>
                <BrandSub><Fit w={165}>TOURISME & CONGRÈS</Fit></BrandSub>
              </Brand>
              <NavItem $mr={43}><Fit w={225}>DÉCOUVRIR BORDEAUX</Fit></NavItem>
              <NavItem $mr={57}><Fit w={153}>À VOIR, À FAIRE</Fit></NavItem>
              <NavItem $mr={55} $teal><Fit w={222}>PRÉPARER SON SÉJOUR</Fit></NavItem>
              <SearchSlot><Search s={24} w={2.3} /></SearchSlot>
            </Header>
            <BookBar><Fit w={319}>ACHETER ET RÉSERVER EN LIGNE</Fit><Chevron w={16} h={9} s={1.4} /></BookBar>
            <Upper>
              <LinkList>
                <div><Fit w={88}>TRANSPORTS</Fit></div>
                <div><Fit w={107}>INFORMATIONS</Fit></div>
                <div><Fit w={80}>NOS PLANS</Fit></div>
              </LinkList>
              <svg width="315" height="46"><path d="M0 0h314.500v30L0 46z" fill="#e1cb14" /></svg>
            </Upper>
            <Rule $w={693} />
            <FooterBlock>
              <FooterLinks>
                <Fit w={83}>PLAN DU SITE</Fit><Fit w={76}>NEWSLETTER</Fit>
                <Fit w={96}>ESPACE PRESSE</Fit><Fit w={47}>VIDÉOS</Fit>
                <Fit w={66}>WEBCAMS</Fit><div><Fit w={66}>MENTIONS</Fit><Fit w={53}>LÉGALES</Fit></div>
                <Fit w={30}>CGV</Fit><Fit w={105}>TAXE DE SÉJOUR</Fit>
                <div><Fit w={76}>BAROMÈTRE</Fit><Fit w={82}>TOURISTIQUE</Fit></div>
              </FooterLinks>
              <Shortcut $w={100}>
                <Disc>
                  <svg width="27" height="28" viewBox="0 0 27 28"><rect x="1" y="3" width="25" height="24" rx="3" fill="#111" /><rect x="4" y="10" width="19" height="14.500" rx="1" fill="#fff" /><path d="M4.500 1h5v6h-5zM17.500 1h5v6h-5z" fill="#111" stroke="#fff" strokeWidth="1.400" /><path d="M7 14.500h3.500M12 14.500h3.500M17 14.500h3.500M7 20h3.500M12 20h3.500M17 20h3.500" stroke="#111" strokeWidth="3.200" /></svg>
                </Disc>
                <Fit w={55}>AGENDA</Fit>
              </Shortcut>
              <Shortcut $w={102}><Disc /><Fit w={78}>BROCHURES</Fit><Fit w={64}>ET GUIDES</Fit></Shortcut>
              <Shortcut $w={140}><Disc /><Fit w={96}>APPLICATIONS</Fit><Fit w={55}>MOBILES</Fit></Shortcut>
              <Shortcut $w={90}><Disc /><Fit w={80}>TRANSPORTS</Fit></Shortcut>
            </FooterBlock>
            <Rule $w={1043} />
            <Logos>
              <Unesco /><BestDestination /><FrenchCities />
              <LogoPair><AirFrance /><Metropole /><Qualite /></LogoPair>
            </Logos>
            <Rule $w={1043} />
            <Cookies>
              <CookieText>
                <CookieLine><Fit w={740}>En poursuivant votre navigation sur ce site, vous acceptez l’utilisation de cookies notamment pour réaliser des statistiques de visites,</Fit></CookieLine>
                <CookieLine><Fit w={875}>pour vous proposer des services et des offres adaptés à vos centres d’intérêts, ainsi que des services de partage et pour optimiser les fonctionnalités du site.</Fit></CookieLine>
                <CookieLine><Fit w={108}><u>Pour en savoir plus</u></Fit><Fit w={347}>sur la protection de votre vie privée et paramétrer les traceurs.</Fit></CookieLine>
              </CookieText>
              <OkButton>Ok</OkButton>
            </Cookies>
            <SideTab>
              <SideText>Gagnez votre Pass Bordeaux Fête le vin 2018</SideText>
              <svg width="8" height="13" fill="none" stroke="#fff" strokeWidth="3"><path d="M7 1.500 2 6.500l5 5" /></svg>
            </SideTab>
          </Page>
          <Scrollbar>
            <Chevron w={12} h={9} c="#555" s={3} up />
            <Thumb />
            <Chevron w={12} h={9} c="#555" s={3} />
          </Scrollbar>
        </Viewport>
        <BottomEdge />
      </Browser>

      <Brightness>
        <Level />
        <svg width="16" height="16" viewBox="-8 -8 16 16" fill="#fff">
          <circle r="4" />
          {[0, 45, 90, 135, 180, 225, 270, 315].map((a) => <circle key={a} r="1" cx="6.600" transform={`rotate(${a})`} />)}
        </svg>
      </Brightness>

      <Dialog>
        <DialogBar>
          <svg width="11" height="11"><path d="M.5 8.500h10" stroke="#333" strokeWidth="2.200" /></svg>
          <svg width="11" height="11"><path d="M.8.800l9.400 9.400M10.200.8.800 10.200" stroke="#333" strokeWidth="2.200" /></svg>
        </DialogBar>
        <DialogRow>
          <svg width="48" height="48" viewBox="0 0 48 48">
            <defs><radialGradient id="gr"><stop offset="0" stopColor="#b9dd1c" /><stop offset="1" stopColor="#4f9a04" /></radialGradient></defs>
            <rect x="1" y="1" width="46" height="46" rx="11" fill="#454545" stroke="#8a8a8a" />
            <rect x="4" y="3.500" width="40" height="40" rx="8" fill="url(#gr)" />
            <rect x="8" y="14" width="32" height="23" rx="3" fill="#fff" stroke="#4a8408" strokeWidth="1.500" />
            <path d="M16 17v-3q0-2 3-2.500 0-4 5-4t5 4q3 .5 3 2.500v3z" fill="#fff" stroke="#4a8408" strokeWidth="1.500" />
            <circle cx="24" cy="12" r="1.600" fill="#4a8408" />
            <path d="M12 20h12v14H12z" fill="#6da514" /><circle cx="18" cy="25.500" r="3.700" fill="#fff" /><path d="M13 33q0-4.500 5-4.500t5 4.500z" fill="#fff" />
            <path d="M27 23h8M27 26h8M27 29h8" stroke="#4a8408" strokeWidth="1.400" />
          </svg>
          <DialogButton><Fit w={111}>Carte d’identité</Fit></DialogButton>
        </DialogRow>
        <DialogRow>
          <svg width="48" height="48" viewBox="0 0 48 48">
            <defs><radialGradient id="bl"><stop offset="0" stopColor="#63d5e3" /><stop offset=".6" stopColor="#3aa4bd" /><stop offset="1" stopColor="#256f8b" /></radialGradient></defs>
            <rect x="1" y="1" width="46" height="46" rx="11" fill="#404040" stroke="#777" />
            <rect x="4" y="4" width="40" height="40" rx="8" fill="url(#bl)" />
            <path d="M16 17c1-10 17-9 17 0 0 6.500-8.800 7-8.800 14.500" fill="none" stroke="#fff" strokeWidth="3.800" />
            <path d="M22 34.500h4.200v4.300H22z" fill="#ddd5c2" />
          </svg>
          <DialogButton><Fit w={141}>Manuel d'utilisation</Fit></DialogButton>
        </DialogRow>
      </Dialog>
    </Desktop>
  );
}
